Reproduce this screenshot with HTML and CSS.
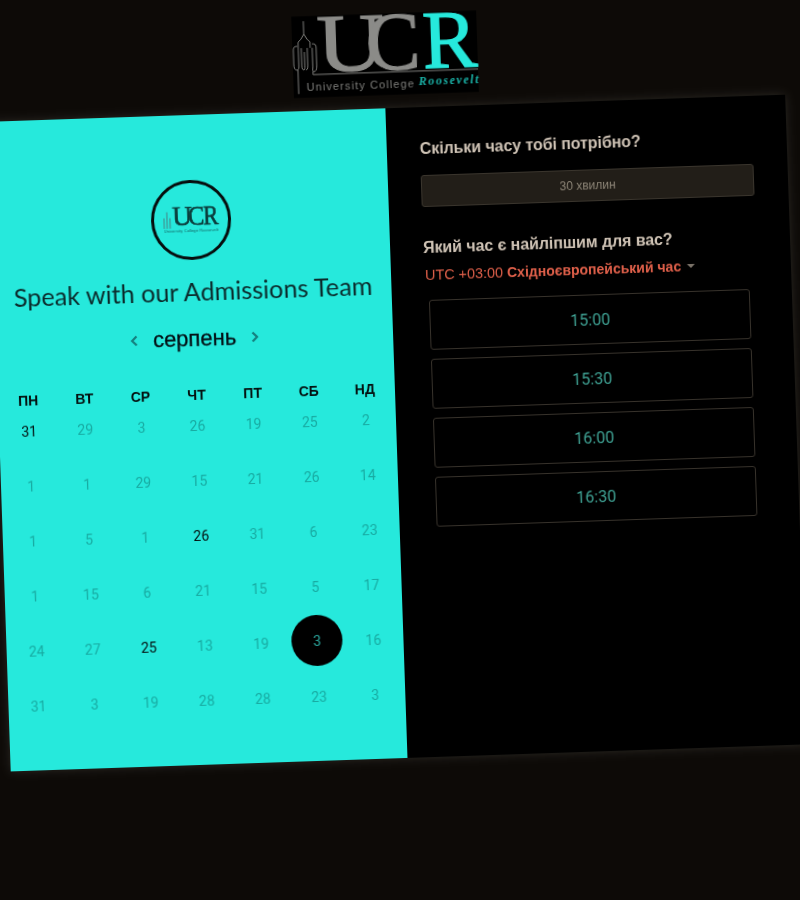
FILE: index.html
```html
<!DOCTYPE html>
<html lang="uk">
<head>
<meta charset="utf-8">
<title>Speak with our Admissions Team</title>
<link rel="stylesheet" href="styles.css">
</head>
<body>
<div class="page">
  <header class="top">
    <svg class="brand" viewBox="0 0 186 82" aria-label="UCR University College Roosevelt">
      <rect width="186" height="82" fill="#000"/>
      <g fill="none" stroke="#7f7f7c" stroke-width="1">
        <path d="M12 5v13M12 18l-3 5-3 3v8M12 18l3 5 3 3v6"/>
        <path d="M5 30c-3 0-4 1-4 4v14c0 4 1 6 3 6s2-2 2-5V34M5 54v24"/>
        <path d="M20 28c3 0 4 1 4 4v18c0 4-1 6-3 6s-1-2-1-5V32M20 56v3H186"/>
        <path d="M9 32v18c0 3 1 4 2 4s1-2 1-4V36M15 32v18c0 3-1 4-2 4"/>
      </g>
      <text class="big" x="25" y="56" textLength="68" lengthAdjust="spacingAndGlyphs">U</text>
      <text class="big" x="74" y="56" textLength="55" lengthAdjust="spacingAndGlyphs">C</text>
      <text class="big teal" x="131" y="56" textLength="55" lengthAdjust="spacingAndGlyphs">R</text>
      <text class="sub" x="13" y="75" textLength="108">University College</text>
      <text class="ros" x="126" y="73" textLength="60">Roosevelt</text>
    </svg>
  </header>
  <main class="card">
    <section class="cal">
      <div class="avatar">
        <svg class="mini" viewBox="0 0 186 82" aria-hidden="true">
          <g fill="none" stroke="#3f9b98" stroke-width="4">
            <path d="M20 14v50M11 32v32M29 32v32"/>
          </g>
          <text class="big dark" x="36" y="56" textLength="60" lengthAdjust="spacingAndGlyphs">U</text>
          <text class="big dark" x="84" y="56" textLength="50" lengthAdjust="spacingAndGlyphs">C</text>
          <text class="big dark" x="130" y="56" textLength="46" lengthAdjust="spacingAndGlyphs">R</text>
          <text class="sub dark" x="10" y="76" textLength="165">University College Roosevelt</text>
        </svg>
      </div>
      <h1 class="title">Speak with our Admissions Team</h1>
      <div class="month">
        <svg class="chev" viewBox="0 0 10 12"><path d="M7.5 1.5L3 6l4.5 4.5"/></svg>
        <span class="month-name">серпень</span>
        <svg class="chev" viewBox="0 0 10 12"><path d="M2.5 1.5L7 6l-4.5 4.5"/></svg>
      </div>
      <div class="week">
        <span>пн</span><span>вт</span><span>ср</span><span>чт</span><span>пт</span><span>сб</span><span>нд</span>
      </div>
      <div class="days">
        <span class="day on">31</span><span class="day">29</span><span class="day">3</span><span class="day">26</span><span class="day">19</span><span class="day">25</span><span class="day">2</span>
        <span class="day">1</span><span class="day">1</span><span class="day">29</span><span class="day">15</span><span class="day">21</span><span class="day">26</span><span class="day">14</span>
        <span class="day">1</span><span class="day">5</span><span class="day">1</span><span class="day on">26</span><span class="day">31</span><span class="day">6</span><span class="day">23</span>
        <span class="day">1</span><span class="day">15</span><span class="day">6</span><span class="day">21</span><span class="day">15</span><span class="day">5</span><span class="day">17</span>
        <span class="day">24</span><span class="day">27</span><span class="day on">25</span><span class="day">13</span><span class="day">19</span><span class="day"><b class="picked">3</b></span><span class="day">16</span>
        <span class="day">31</span><span class="day">3</span><span class="day">19</span><span class="day">28</span><span class="day">28</span><span class="day">23</span><span class="day">3</span>
      </div>
    </section>
    <section class="side">
      <h2 class="ask">Скільки часу тобі потрібно?</h2>
      <div class="duration">30 хвилин</div>
      <h2 class="ask second">Який час є найліпшим для вас?</h2>
      <div class="zone">UTC +03:00 <strong>Східноєвропейський час</strong><i class="caret"></i></div>
      <div class="slots">
        <div class="slot">15:00</div>
        <div class="slot">15:30</div>
        <div class="slot">16:00</div>
        <div class="slot">16:30</div>
      </div>
    </section>
  </main>
</div>
</body>
</html>
```
FILE: styles.css
```css
html, body {
  margin: 0;
  height: 900px;
  overflow: hidden;
  background: #0d0a07;
}
* { box-sizing: border-box; }

.page {
  width: 800px;
  height: 900px;
  transform: rotate(-1.95deg);
  transform-origin: 400px 450px;
  filter: blur(.3px);
  font-family: "Liberation Sans", Arial, sans-serif;
}

.top {
  height: 108px;
  width: 796px;
  padding-top: 13px;
  display: flex;
  justify-content: center;
}
.brand { width: 185px; height: 82px; display: block; overflow: visible; }
.big {
  font-family: "Liberation Serif", serif;
  font-size: 84px;
  fill: #8b8b88;
  stroke: #8b8b88;
  stroke-width: 1.2px;
}
.teal { fill: #26e9dc; stroke: #26e9dc; }
.sub {
  font-family: "Liberation Sans", sans-serif;
  font-size: 11px;
  fill: #7f7f7c;
}
.ros {
  font-family: "Liberation Serif", serif;
  font-size: 12px;
  font-style: italic;
  font-weight: 700;
  fill: #1ab3a8;
}
.big.dark { fill: #0b3d3c; stroke: #0b3d3c; stroke-width: 2px; }
.sub.dark { fill: #14615f; font-size: 12px; }

.card {
  width: 797px;
  height: 650px;
  display: grid;
  grid-template-columns: 397px 400px;
  box-shadow: 0 0 10px rgba(120, 120, 110, .28);
}

.cal {
  background: #26e9dc;
  padding-top: 65px;
  display: flex;
  flex-direction: column;
  align-items: center;
}
.avatar {
  width: 80px;
  height: 80px;
  border: 3px solid #060d0d;
  border-radius: 50%;
  display: flex;
  align-items: center;
  justify-content: center;
}
.mini { width: 62px; height: 27px; display: block; overflow: visible; }
.title {
  margin: 15px 0 0;
  font-family: Lato, sans-serif;
  font-weight: 400;
  font-size: 25.2px;
  line-height: 32px;
  color: #0b2a2b;
  white-space: nowrap;
}
.month {
  margin-top: 16px;
  height: 32px;
  display: flex;
  align-items: center;
  gap: 14px;
}
.month-name { font-size: 22px; color: #030f14; -webkit-text-stroke: .3px #030f14; }
.chev { width: 10px; height: 12px; display: block; }
.chev path {
  fill: none;
  stroke: #15807e;
  stroke-width: 2.2;
}
.week {
  margin-top: 30px;
  width: 100%;
  height: 20px;
  padding: 0 2px;
  display: grid;
  grid-template-columns: repeat(7, 1fr);
  align-items: center;
  text-align: center;
  font-size: 14px;
  font-weight: 700;
  text-transform: uppercase;
  color: #04100f;
}
.days {
  margin-top: 1px;
  width: 100%;
  padding: 0 2px;
  display: grid;
  grid-template-columns: repeat(7, 1fr);
  grid-auto-rows: 40px;
  row-gap: 15px;
  font-family: Roboto, sans-serif;
  font-size: 14px;
  color: #18aba2;
}
.day {
  display: flex;
  align-items: center;
  justify-content: center;
}
.on { color: #04100f; }
.picked {
  flex: none;
  width: 51px;
  height: 51px;
  margin-bottom: 3px;
  border-radius: 50%;
  background: #000;
  color: #2aa69d;
  font-weight: 400;
  display: flex;
  align-items: center;
  justify-content: center;
}

.side {
  background: #000;
  padding: 32px 34px 0 33px;
}
.ask {
  margin: 0;
  font-size: 16px;
  letter-spacing: -.08px;
  line-height: 20px;
  font-weight: 700;
  color: #cfc3b5;
  white-space: nowrap;
}
.second { margin-top: 31px; }
.duration {
  margin-top: 16px;
  height: 32px;
  background: #221e18;
  border: 1px solid #3a352d;
  border-radius: 3px;
  display: flex;
  align-items: center;
  justify-content: center;
  font-size: 12px;
  color: #8d8577;
}
.zone {
  margin-top: 7px;
  height: 20px;
  padding-left: 1px;
  display: flex;
  align-items: center;
  font-size: 14.4px;
  color: #e0604a;
  white-space: pre;
}
.zone strong { font-size: 14px; font-weight: 700; }
.caret {
  margin-left: 6px;
  width: 0;
  height: 0;
  border-left: 4px solid transparent;
  border-right: 4px solid transparent;
  border-top: 4px solid #7a7268;
}
.slots {
  margin: 15px 8px 0 4px;
  display: flex;
  flex-direction: column;
  gap: 9px;
}
.slot {
  height: 50px;
  border: 1px solid #37322b;
  border-radius: 3px;
  display: flex;
  align-items: center;
  justify-content: center;
  font-family: Roboto, sans-serif;
  font-size: 16px;
  color: #3fa294;
}
```
